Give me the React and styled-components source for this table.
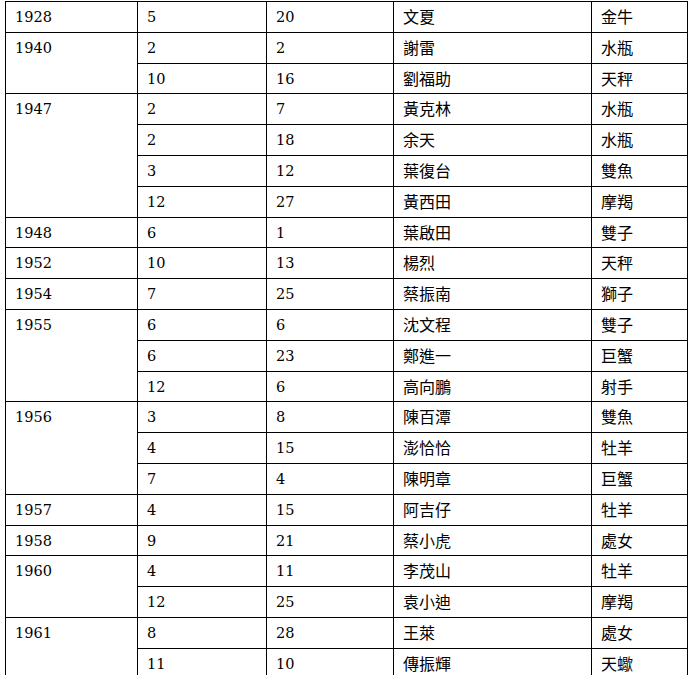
import styled, { createGlobalStyle } from "styled-components";

const GlobalStyle = createGlobalStyle`
  body {
    margin: 0;
    background: #fff;
  }
`;

const columns = [132, 129, 127, 198, 96];

const data = [
  { year: "1928", rows: [["5", "20", "文夏", "金牛"]] },
  { year: "1940", rows: [["2", "2", "謝雷", "水瓶"], ["10", "16", "劉福助", "天秤"]] },
  {
    year: "1947",
    rows: [
      ["2", "7", "黃克林", "水瓶"],
      ["2", "18", "余天", "水瓶"],
      ["3", "12", "葉復台", "雙魚"],
      ["12", "27", "黃西田", "摩羯"],
    ],
  },
  { year: "1948", rows: [["6", "1", "葉啟田", "雙子"]] },
  { year: "1952", rows: [["10", "13", "楊烈", "天秤"]] },
  { year: "1954", rows: [["7", "25", "蔡振南", "獅子"]] },
  {
    year: "1955",
    rows: [
      ["6", "6", "沈文程", "雙子"],
      ["6", "23", "鄭進一", "巨蟹"],
      ["12", "6", "高向鵬", "射手"],
    ],
  },
  {
    year: "1956",
    rows: [
      ["3", "8", "陳百潭", "雙魚"],
      ["4", "15", "澎恰恰", "牡羊"],
      ["7", "4", "陳明章", "巨蟹"],
    ],
  },
  { year: "1957", rows: [["4", "15", "阿吉仔", "牡羊"]] },
  { year: "1958", rows: [["9", "21", "蔡小虎", "處女"]] },
  { year: "1960", rows: [["4", "11", "李茂山", "牡羊"], ["12", "25", "袁小迪", "摩羯"]] },
  { year: "1961", rows: [["8", "28", "王萊", "處女"], ["11", "10", "傳振輝", "天蠍"]] },
];

const Page = styled.div`
  padding: 1px 0 0 5px;
  height: 675px;
  overflow: hidden;
`;

const Table = styled.table`
  border-collapse: collapse;
  table-layout: fixed;
  width: 682px;
`;

const Col = styled.col`
  width: ${(p) => p.$w}px;
`;

const Row = styled.tr`
  height: 30.8px;
`;

const Cell = styled.td`
  border: 1px solid #000;
  padding: ${(p) => (p.$cjk ? "4px 9px 0" : "5px 9px 0")};
  vertical-align: top;
  color: #000;
  font-family: ${(p) =>
    p.$cjk
      ? `"Noto Sans CJK TC", "Noto Sans CJK SC", sans-serif`
      : `"DejaVu Serif", serif`};
  font-size: ${(p) => (p.$cjk ? "16px" : "14.5px")};
  line-height: 20px;
  white-space: nowrap;
`;

export default function App() {
  return (
    <>
      <GlobalStyle />
      <Page>
        <Table>
          <colgroup>
            {columns.map((w, i) => (
              <Col key={i} $w={w} />
            ))}
          </colgroup>
          <tbody>
            {data.map((group) =>
              group.rows.map((r, i) => (
                <Row key={group.year + i}>
                  {i === 0 && <Cell rowSpan={group.rows.length}>{group.year}</Cell>}
                  <Cell>{r[0]}</Cell>
                  <Cell>{r[1]}</Cell>
                  <Cell $cjk>{r[2]}</Cell>
                  <Cell $cjk>{r[3]}</Cell>
                </Row>
              ))
            )}
          </tbody>
        </Table>
      </Page>
    </>
  );
}
